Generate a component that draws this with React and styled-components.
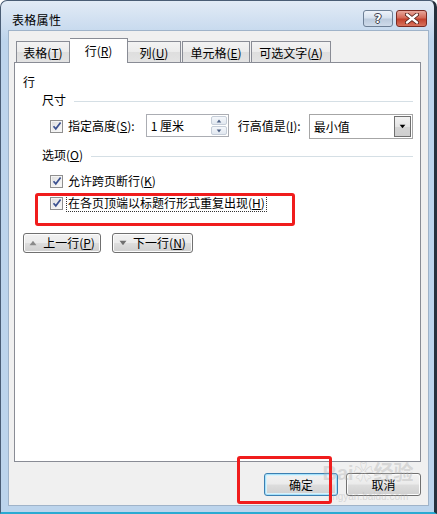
import React from "react";
import styled, { createGlobalStyle } from "styled-components";

const Global = createGlobalStyle`
  html, body { margin: 0; padding: 0; background: #ffffff; }
  body { font-family: "Microsoft YaHei", "Noto Sans CJK SC", "Noto Sans", sans-serif; font-size: 12px; color: #000; }
  * { box-sizing: border-box; }
`;

const Window = styled.div`
  position: relative;
  width: 437px;
  height: 514px;
  border: 1px solid #4a5d75;
  border-right: 3px solid #26313d;
  border-bottom: 2px solid #2aaad2;
  border-radius: 7px 7px 0 0;
  background: linear-gradient(#e2ebf6 0px, #cbdcef 26px, #bdd4ec 40px, #bcd4ec 100%);
  padding: 0 5px 6px 7px;
  display: flex;
  flex-direction: column;
  overflow: hidden;
`;

const TitleBar = styled.div`
  height: 29px;
  display: flex;
  align-items: center;
  justify-content: space-between;
  padding: 0 2px 0 4px;
`;

const Title = styled.div`
  font-size: 12px;
  line-height: 16px;
  color: #000;
  margin-top: 8px;
  letter-spacing: 0.3px;
`;

const Caps = styled.div`
  display: flex;
  gap: 3px;
  align-self: flex-start;
  margin-top: 9px;
`;

const CapBtn = styled.div`
  width: ${(p) => p.$w}px;
  height: 17px;
  border: 1px solid ${(p) => (p.$red ? "#7a2a22" : "#6d7f95")};
  border-radius: 3px;
  background: ${(p) =>
    p.$red
      ? "linear-gradient(#e8a79c 0%, #d46a58 45%, #c2412d 55%, #d8735d 100%)"
      : "linear-gradient(#eef3fa 0%, #d6e1ee 45%, #bccbdd 55%, #cfdbea 100%)"};
  display: flex;
  align-items: center;
  justify-content: center;
  color: #fff;
  font-family: "DejaVu Sans", sans-serif;
  font-weight: bold;
  font-size: 12px;
  line-height: 1;
  text-shadow: 0 0 1px #333, 1px 0 0 #445, -1px 0 0 #445, 0 1px 0 #445, 0 -1px 0 #445;
`;

const Client = styled.div`
  flex: 1;
  background: #f0f0f0;
  border: 1px solid #9fb3c9;
  display: flex;
  flex-direction: column;
  padding: 7px 7px 0 5px;
`;

const TabRow = styled.div`
  height: 24px;
  display: flex;
  align-items: flex-end;
  padding-left: 2px;
  position: relative;
  z-index: 1;
`;

const Tab = styled.div`
  width: ${(p) => p.$w}px;
  margin-right: ${(p) => p.$mr || 0}px;
  height: ${(p) => (p.$active ? 25 : 21)}px;
  margin-bottom: ${(p) => (p.$active ? -1 : 0)}px;
  border: 1px solid #898c95;
  border-bottom: none;
  border-left-width: ${(p) => (p.$noLeft ? 0 : 1)}px;
  background: ${(p) =>
    p.$active ? "#ffffff" : "linear-gradient(#f3f3f3 0%, #ebebeb 50%, #dedede 52%, #e3e3e3 100%)"};
  display: flex;
  align-items: center;
  justify-content: center;
  font-size: 12px;
  line-height: 16px;
  padding-top: ${(p) => (p.$active ? 0 : 1)}px;
`;

const U = styled.span`
  text-decoration: underline;
  text-underline-offset: 1px;
`;

const Panel = styled.div`
  height: 400px;
  background: #ffffff;
  border: 1px solid #898c95;
  padding: 11px 7px 0 8px;
  display: flex;
  flex-direction: column;
`;

const Label = styled.div`
  line-height: 16px;
  white-space: nowrap;
`;

const GroupHeader = styled.div`
  display: flex;
  align-items: center;
  gap: 8px;
  margin-top: ${(p) => p.$mt}px;
  padding-left: 19px;
  line-height: 16px;
  white-space: nowrap;
  &::after {
    content: "";
    flex: 1;
    height: 1px;
    background: #d5dfe5;
    margin-top: 2px;
  }
`;

const Row = styled.div`
  display: flex;
  align-items: center;
  margin-top: ${(p) => p.$mt}px;
  padding-left: 27px;
  height: 18px;
`;

const CheckBoxBox = styled.div`
  width: 13px;
  height: 13px;
  border: 1px solid #8f8f8f;
  background: linear-gradient(135deg, #dcdcdc 0%, #f0f0f0 60%, #fbfbfb 100%);
  box-shadow: inset 0 0 0 1px #f4f4f4;
  display: flex;
  align-items: center;
  justify-content: center;
  margin-right: 4px;
  flex: none;
`;

const CheckLabel = styled.div`
  line-height: 16px;
  padding: 0 1px;
  white-space: nowrap;
  outline: ${(p) => (p.$focus ? "1px dotted #333" : "none")};
  outline-offset: 0px;
`;

const CheckMark = () => (
  <svg width="10" height="10" viewBox="0 0 10 10">
    <path d="M1.5 5.2 L3.8 7.8 L8.6 1.6" fill="none" stroke="#3b5190" strokeWidth="1.7" />
  </svg>
);

const Check = ({ children, focus, mt }) => (
  <Row $mt={mt}>
    <CheckBoxBox>
      <CheckMark />
    </CheckBoxBox>
    <CheckLabel $focus={focus}>{children}</CheckLabel>
  </Row>
);

const SizeRow = styled.div`
  display: flex;
  align-items: flex-start;
  margin-top: 6px;
  padding-left: 27px;
  height: 26px;
`;

const InlineCheck = styled.div`
  display: flex;
  align-items: center;
  height: 24px;
`;

const SpinBox = styled.div`
  width: 83px;
  height: 23px;
  margin-left: 10px;
  border: 1px solid #abadb3;
  background: #fff;
  display: flex;
  align-items: center;
  justify-content: space-between;
  padding: 0 1px 0 4px;
  font-size: 12px;
`;

const SpinButtons = styled.div`
  width: 16px;
  height: 19px;
  display: flex;
  flex-direction: column;
  gap: 1px;
`;

const SpinBtn = styled.div`
  flex: 1;
  border: 1px solid #c5cdd8;
  border-radius: 2px;
  background: linear-gradient(#f4f7fb, #e2e8f0);
  display: flex;
  align-items: center;
  justify-content: center;
`;

const InlineLabel = styled.div`
  line-height: 24px;
  margin-left: 9px;
  white-space: nowrap;
`;

const Select = styled.div`
  width: 104px;
  height: 25px;
  margin-left: 8px;
  border: 1px solid #a6a6a6;
  background: #fff;
  display: flex;
  align-items: center;
  justify-content: space-between;
  padding: 0 1px 0 4px;
`;

const DropBtn = styled.div`
  width: 17px;
  height: 21px;
  border: 1px solid #707070;
  background: linear-gradient(#f2f2f2, #e4e4e4 50%, #d4d4d4 51%, #cfcfcf);
  display: flex;
  align-items: center;
  justify-content: center;
`;

const NavRow = styled.div`
  display: flex;
  gap: 11px;
  margin-top: 21px;
`;

const Button = styled.div`
  width: ${(p) => p.$w}px;
  height: ${(p) => p.$h || 20}px;
  border: 1px solid ${(p) => (p.$default ? "#3c7fb1" : "#707070")};
  border-radius: 3px;
  background: linear-gradient(#f2f2f2 0%, #ebebeb 48%, #dddddd 52%, #cfcfcf 100%);
  box-shadow: ${(p) => (p.$default ? "inset 0 0 0 1px #a6e2fb, inset 0 0 0 2px #d9f1fb" : "inset 0 0 0 1px #fcfcfc")};
  display: flex;
  align-items: center;
  justify-content: center;
  gap: 6px;
  font-size: 12px;
  line-height: 16px;
  white-space: nowrap;
`;

const Footer = styled.div`
  display: flex;
  justify-content: flex-end;
  gap: 8px;
  padding-top: 11px;
`;

const RedMark = styled.div`
  position: absolute;
  left: ${(p) => p.$x}px;
  top: ${(p) => p.$y}px;
  width: ${(p) => p.$w}px;
  height: ${(p) => p.$h}px;
  border: 3px solid #f01c1c;
  border-radius: 3px;
  pointer-events: none;
`;

const Watermark = styled.div`
  position: absolute;
  left: 322px;
  top: 460px;
  width: 90px;
  color: rgba(175, 175, 175, 0.4);
  font-family: "Liberation Sans", "Noto Sans CJK SC", sans-serif;
  pointer-events: none;
  display: flex;
  flex-direction: column;
  align-items: center;
`;

const WmTop = styled.div`
  font-size: 20px;
  font-weight: bold;
  line-height: 24px;
  white-space: nowrap;
`;

const WmUrl = styled.div`
  font-size: 10px;
  line-height: 12px;
  margin-top: 6px;
  white-space: nowrap;
`;

const Tri = ({ dir, color = "#808080", size = 7 }) => (
  <svg width={size + 2} height={size} viewBox="0 0 9 7">
    {dir === "up" ? (
      <path d="M0.5 6 L4.5 1 L8.5 6 Z" fill={color} />
    ) : (
      <path d="M0.5 1 L8.5 1 L4.5 6 Z" fill={color} />
    )}
  </svg>
);

export default function App() {
  return (
    <>
      <Global />
      <Window>
        <TitleBar>
          <Title>表格属性</Title>
          <Caps>
            <CapBtn $w={30}>?</CapBtn>
            <CapBtn $w={31} $red>
              <svg width="14" height="11" viewBox="0 0 14 11">
                <path d="M2 1.5 L12 9.5 M12 1.5 L2 9.5" stroke="#4a1a14" strokeWidth="4" strokeLinecap="round" />
                <path d="M2 1.5 L12 9.5 M12 1.5 L2 9.5" stroke="#ffffff" strokeWidth="2.4" strokeLinecap="round" />
              </svg>
            </CapBtn>
          </Caps>
        </TitleBar>
        <Client>
          <TabRow>
            <Tab $w={54}>表格(<U>T</U>)</Tab>
            <Tab $w={58} $active $noLeft>行(<U>R</U>)</Tab>
            <Tab $w={53} $noLeft $mr={1}>列(<U>U</U>)</Tab>
            <Tab $w={68} $mr={1}>单元格(<U>E</U>)</Tab>
            <Tab $w={80}>可选文字(<U>A</U>)</Tab>
          </TabRow>
          <Panel>
            <Label>行</Label>
            <GroupHeader $mt={2}><span>尺寸</span></GroupHeader>
            <SizeRow>
              <InlineCheck>
                <CheckBoxBox>
                  <CheckMark />
                </CheckBoxBox>
                <CheckLabel>指定高度(<U>S</U>):</CheckLabel>
              </InlineCheck>
              <SpinBox>
                <span>1 厘米</span>
                <SpinButtons>
                  <SpinBtn>
                    <Tri dir="up" color="#4d6185" size={4} />
                  </SpinBtn>
                  <SpinBtn>
                    <Tri dir="down" color="#4d6185" size={4} />
                  </SpinBtn>
                </SpinButtons>
              </SpinBox>
              <InlineLabel>行高值是(<U>I</U>):</InlineLabel>
              <Select>
                <span>最小值</span>
                <DropBtn>
                  <Tri dir="down" color="#000" size={5} />
                </DropBtn>
              </Select>
            </SizeRow>
            <GroupHeader $mt={7}><span>选项(<U>O</U>)</span></GroupHeader>
            <Check mt={9}>允许跨页断行(<U>K</U>)</Check>
            <Check mt={4} focus>
              在各页顶端以标题行形式重复出现(<U>H</U>)
            </Check>
            <NavRow>
              <Button $w={78}>
                <Tri dir="up" color="#8a8a8a" size={6} />
                <span>上一行(<U>P</U>)</span>
              </Button>
              <Button $w={81}>
                <Tri dir="down" color="#6f6f6f" size={6} />
                <span>下一行(<U>N</U>)</span>
              </Button>
            </NavRow>
          </Panel>
          <Footer>
            <Button $w={74} $h={23} $default>确定</Button>
            <Button $w={75} $h={23}>取消</Button>
          </Footer>
        </Client>
        <Watermark>
          <WmTop>Bai❀经验</WmTop>
          <WmUrl>jingyan.baidu.com</WmUrl>
        </Watermark>
        <RedMark $x={34} $y={192} $w={260} $h={33} />
        <RedMark $x={236} $y={455} $w={95} $h={48} />
      </Window>
    </>
  );
}
